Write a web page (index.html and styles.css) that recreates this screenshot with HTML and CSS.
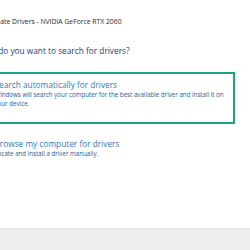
FILE: index.html
```html
<!DOCTYPE html>
<html>
<head>
<meta charset="utf-8">
<link rel="stylesheet" href="styles.css">
</head>
<body>
<div class="page">
  <div class="main">
    <div class="title">Update Drivers - NVIDIA GeForce RTX 2060</div>
    <div class="question">How do you want to search for drivers?</div>
    <div class="option selected">
      <div class="opt-title">Search automatically for drivers</div>
      <div class="opt-desc">Windows will search your computer for the best available driver and install it on your device.</div>
    </div>
    <div class="option">
      <div class="opt-title">Browse my computer for drivers</div>
      <div class="opt-desc">Locate and install a driver manually.</div>
    </div>
  </div>
  <div class="footer"></div>
</div>
</body>
</html>
```
FILE: styles.css
```css
html, body {
  margin: 0;
  padding: 0;
  background: #ffffff;
  width: 250px;
  height: 250px;
  overflow: hidden;
}
.page {
  display: flex;
  flex-direction: column;
  height: 250px;
  font-family: "Open Sans", "Noto Sans", sans-serif;
}
.main {
  flex: 1;
  padding-top: 17px;
}
.title {
  margin-left: -13px;
  font-size: 6.8px;
  color: #2a2a2a;
  line-height: 10px;
  white-space: nowrap;
}
.question {
  margin-left: -21.5px;
  margin-top: 18px;
  font-size: 8.3px;
  color: #1e4082;
  line-height: 12px;
  white-space: nowrap;
}
.option {
  margin-left: -20px;
  width: 255px;
  box-sizing: border-box;
  padding: 5px 0 0 12.5px;
  border: 2px solid transparent;
}
.option.selected {
  margin-top: 15px;
  height: 52px;
  border-color: #1aa383;
}
.option + .option {
  margin-top: 6.5px;
}
.opt-title {
  font-size: 8.3px;
  line-height: 11px;
  color: #2f7bb4;
  white-space: nowrap;
}
.opt-desc {
  font-size: 6.2px;
  line-height: 9px;
  color: #2a5d8c;
  width: 236px;
}
.footer {
  height: 21px;
  background: #eeeeee;
  border-top: 1px solid #e6e6e6;
}
```
